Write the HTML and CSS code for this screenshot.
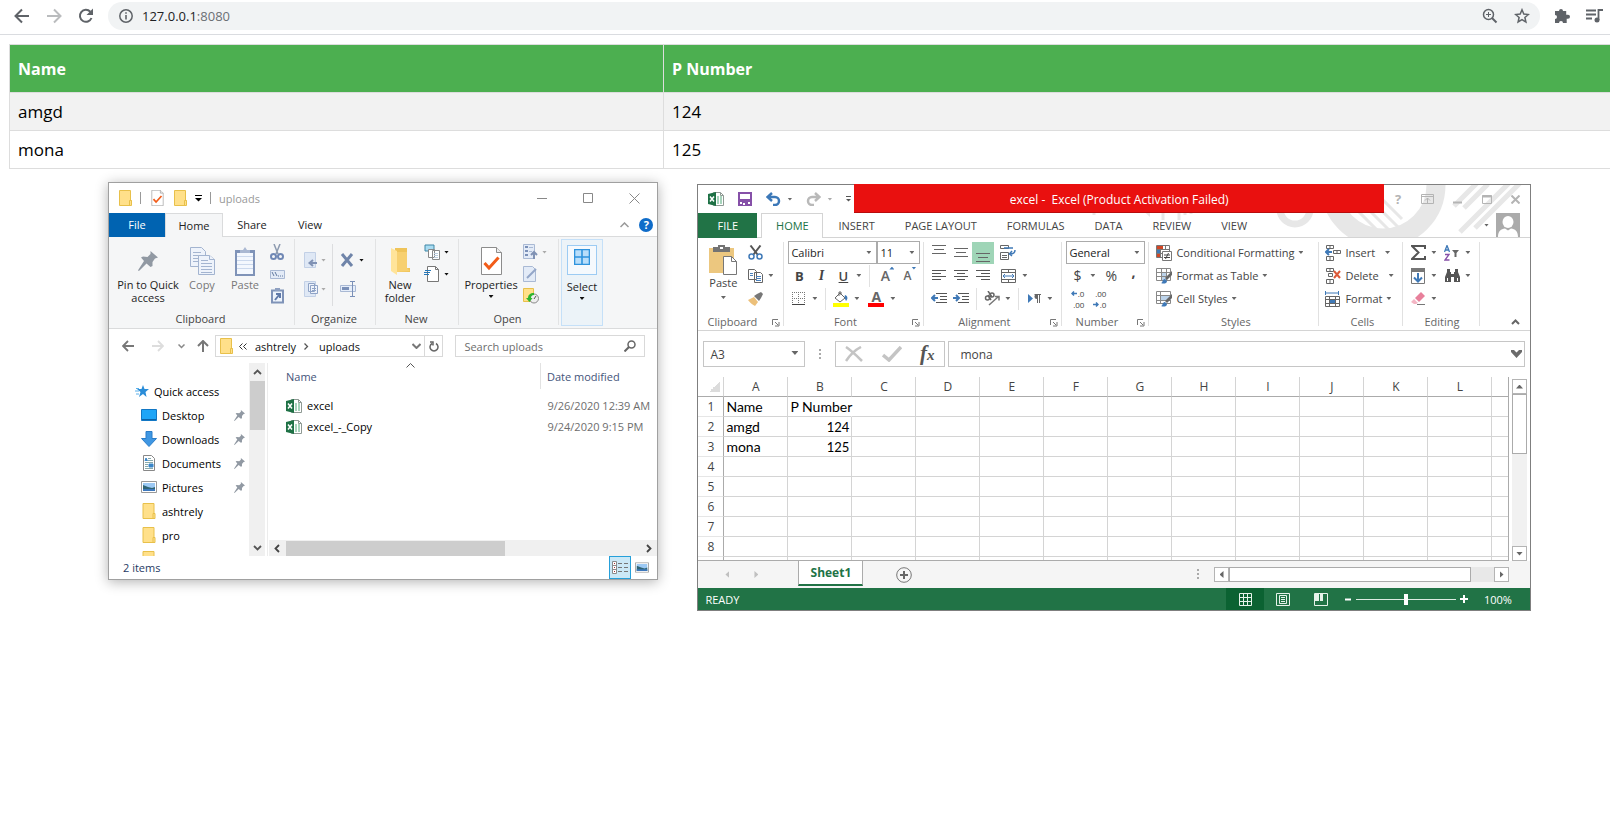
FILE: index.html
```html
<!DOCTYPE html>
<html lang="en">
<head>
<meta charset="utf-8">
<title>127.0.0.1:8080</title>
<link rel="stylesheet" href="styles.css">
</head>
<body>
<svg class="defs" aria-hidden="true">
  <symbol id="folder" viewBox="0 0 13 16"><path d="M.5.5h11v10h1v5H.5z" fill="#ffe08a" stroke="#e8c04a"/><path d="M10.500 15V10.500h2" fill="none" stroke="#e8c04a"/></symbol>
  <symbol id="pin" viewBox="0 0 20 20"><path d="M12.500 0 20 6.500 17 7.500 14.500 11v4l-2 1-4-3.500L1.500 19.500 0 20l.5-1.500L6 10 3 6.500 5 5.500 9.500 6 12.500 3z" fill="#9199a3"/></symbol>
  <symbol id="xls" viewBox="0 0 16 16"><path d="M5.500 1.500h7l3 3v10h-10z" fill="#fff" stroke="#8f9a94"/><path d="M12.500 1.500v3h3" fill="none" stroke="#8f9a94"/><path d="M9 6h2m1 0h2M9 8h2m1 0h2M9 10h2m1 0h2M9 12h2m1 0h2" stroke="#4fa878"/><path d="M0 3l8-2v14l-8-2z" fill="#1e7145"/><path d="M2 5.500l4 5M6 5.500l-4 5" stroke="#fff" stroke-width="1.500"/></symbol>
  <symbol id="check-doc" viewBox="0 0 21 28"><path d="M.5.5h15l5 5v22H.5z" fill="#fff" stroke="#8c8c8c"/><path d="M15.500.5v5h5" fill="#eee" stroke="#8c8c8c"/><path d="M3.500 16l4.500 5L17.500 10.500" fill="none" stroke="#f25c19" stroke-width="3"/></symbol>
  <symbol id="launcher" viewBox="0 0 8 8"><path d="M.5 6V.5H6M3 3l3 3M7 3v4H3" fill="none" stroke="#777"/></symbol>
  <symbol id="picture" viewBox="0 0 16 12"><path d="M.5.5h15v11H.5z" fill="#fff" stroke="#999"/><path d="M2 2h12v8H2z" fill="#9cc9f4"/><path d="M2 4l5 2 4 1 3-1v4H2z" fill="#2f6473"/><path d="M2 8h12v2H2z" fill="#3d78bd"/></symbol>
  <symbol id="hlines" viewBox="0 0 14 12"><path d="M0 1.500h14M2 5.500h10M0 9.500h14" stroke="#666"/></symbol>
</svg>

<header class="toolbar">
  <button class="nav-btn" aria-label="Back"><svg width="16" height="16" viewBox="0 0 16 16"><path d="M15 8H2M8 1.500 1.500 8 8 14.500" fill="none" stroke="#5f6368" stroke-width="2"/></svg></button>
  <button class="nav-btn" aria-label="Forward"><svg width="16" height="16" viewBox="0 0 16 16"><path d="M1 8h13M8 1.500 14.500 8 8 14.500" fill="none" stroke="#babcbe" stroke-width="2"/></svg></button>
  <button class="nav-btn" aria-label="Reload"><svg width="16" height="16" viewBox="0 0 16 16"><path d="M13.500 10A6 6 0 1 1 12.300 3.700" fill="none" stroke="#5f6368" stroke-width="2"/><path d="M15 .5V7H8.500z" fill="#5f6368"/></svg></button>
  <div class="omnibox">
    <svg width="14" height="14" viewBox="0 0 14 14"><circle cx="7" cy="7" r="6.200" fill="none" stroke="#5f6368" stroke-width="1.500"/><path d="M7 6v4.500M7 3.300v1.500" stroke="#5f6368" stroke-width="1.600"/></svg>
    <a class="url" href="#">127.0.0.1<span>:8080</span></a>
    <svg width="16" height="16" viewBox="0 0 16 16"><circle cx="6.500" cy="6.500" r="5" fill="none" stroke="#5f6368" stroke-width="1.500"/><path d="M10 10l4.500 4.500" stroke="#5f6368" stroke-width="2"/><path d="M4 6.500h5M6.500 4v5" stroke="#5f6368"/></svg>
    <svg class="star" width="16" height="16" viewBox="0 0 16 16"><path d="M8 1.800l1.800 4.300 4.600.4-3.500 3 1 4.500L8 11.700 4.100 14l1-4.500-3.500-3 4.600-.4z" fill="none" stroke="#5f6368" stroke-width="1.500"/></svg>
  </div>
  <svg class="puzzle" width="16" height="16" viewBox="0 0 16 16"><path d="M5 3a2 2 0 0 1 4 0h3.200v3.700H14a2 2 0 0 1 0 4h-1.300V15H9a2 2 0 0 0-4 0H1v-4a2 2 0 0 0 0-4V3z" fill="#5f6368"/></svg>
  <svg width="17" height="14" viewBox="0 0 17 14"><path d="M0 1.500h10M0 5.500h10M0 9.500h6" stroke="#5f6368" stroke-width="1.800"/><path d="M12.500 11V1H17" fill="none" stroke="#5f6368" stroke-width="1.800"/><circle cx="11" cy="11" r="2.500" fill="#5f6368"/></svg>
</header>

<main>
<table class="people">
  <colgroup><col class="col-name"><col></colgroup>
  <thead><tr><th>Name</th><th>P Number</th></tr></thead>
  <tbody><tr><td>amgd</td><td>124</td></tr><tr><td>mona</td><td>125</td></tr></tbody>
</table>

<div class="desktop">
<section class="explorer" aria-label="File Explorer">
  <div class="ex-title">
    <svg width="13" height="16"><use href="#folder"/></svg><i class="bar"></i>
    <svg width="13" height="16"><use href="#check-doc"/></svg>
    <svg width="13" height="16"><use href="#folder"/></svg>
    <svg width="7" height="7" viewBox="0 0 7 7"><path d="M0 .5h7" stroke="#000"/><path d="M0 3h7L3.500 6.500z"/></svg>
    <i class="bar"></i><span class="ex-name">uploads</span>
    <button class="win-btn" aria-label="Minimize"><svg width="11" height="11" viewBox="0 0 11 11"><path d="M0 5.500h10" stroke="#888"/></svg></button>
    <button class="win-btn" aria-label="Maximize"><svg width="11" height="11" viewBox="0 0 11 11"><path d="M.5.5h9v9h-9z" fill="none" stroke="#888"/></svg></button>
    <button class="win-btn" aria-label="Close"><svg width="11" height="11" viewBox="0 0 11 11"><path d="M.5.5l10 10M10.500.5l-10 10" stroke="#888"/></svg></button>
  </div>
  <nav class="ex-tabs">
    <button class="file">File</button><button class="active">Home</button><button>Share</button><button>View</button>
    <svg class="push" width="9" height="6" viewBox="0 0 9 6"><path d="M.5 5l4-4 4 4" fill="none" stroke="#999" stroke-width="1.500"/></svg>
    <button class="help" aria-label="Help">?</button>
  </nav>
  <div class="ex-ribbon">
    <div class="group g-clip">
      <div class="body">
        <button class="big w66"><svg width="20" height="20"><use href="#pin"/></svg><span>Pin to Quick access</span></button>
        <button class="big dim w42"><svg width="25" height="28" viewBox="0 0 25 28"><g fill="#eef3fb" stroke="#a3b4d0"><path d="M.5.5h11l4 4v15H.5z"/><path d="M3 5.500h8M3 8.500h10M3 11.500h10M3 14.500h6"/><path d="M8.500 8.500h11l5 4v15h-16z"/><path d="M11 13.500h7M11 16.500h11M11 19.500h11M11 22.500h11M11 25.500h11M19.500 8.500v4h5"/></g></svg><span>Copy</span></button>
        <button class="big dim w44"><svg width="20" height="29" viewBox="0 0 20 29"><path d="M0 3h20v26H0z" fill="#7f93b8"/><path d="M2 6h16v21H2z" fill="#f4f8fe"/><path d="M2 9.500h16M2 13.500h16M2 17.500h16M2 21.500h16" stroke="#ccd9ed"/><path d="M5 6V3h3l2-3 2 3h3v3z" fill="#aab8d2"/></svg><span>Paste</span></button>
        <div class="stack">
          <svg width="14" height="16" viewBox="0 0 14 16"><path d="M4 0l4 10M10 0L6 10" stroke="#8d9bb0" stroke-width="1.500"/><g fill="none" stroke="#7088b5" stroke-width="2"><circle cx="3.500" cy="12.500" r="2.500"/><circle cx="10.500" cy="12.500" r="2.500"/></g></svg>
          <svg width="15" height="9" viewBox="0 0 15 9"><path d="M.5.5h14v8H.5z" fill="#e3ebf7" stroke="#a9b9d4"/><path d="M2 2l2 4M5 2l2 4M8 6h1m1 0h1m1 0h1" stroke="#61799f"/></svg>
          <svg width="13" height="16" viewBox="0 0 13 16"><path d="M1 2.500h11v12H1z" fill="#eef4fc" stroke="#7f93b8" stroke-width="2"/><path d="M4 0h5v3H4z" fill="#8ea0c1"/><path d="M4 12l4-5M5 6h4v4" fill="none" stroke="#607aa9" stroke-width="2"/></svg>
        </div>
      </div>
      <div class="label">Clipboard</div>
    </div>
    <div class="group g-org">
      <div class="body">
        <div class="pair">
          <span><svg width="14" height="16" viewBox="0 0 14 16"><path d="M.5.5h11v15H.5z" fill="#dfe8f5" stroke="#c2d0e6"/><path d="M5 11h8M9 8l-3.500 3L9 14" fill="none" stroke="#8092b4" stroke-width="2"/></svg><i class="caret faint"></i></span>
          <span><svg width="14" height="16" viewBox="0 0 14 16"><path d="M.5.5h11v15H.5z" fill="#dfe8f5" stroke="#c2d0e6"/><path d="M4.500 2.500h6v8h-6zM6.500 4.500h7v8h-7zM8 7.500h4M8 9.500h4" fill="#eef3fb" stroke="#8fa3c6"/></svg><i class="caret faint"></i></span>
        </div>
        <div class="pair line">
          <span><svg width="16" height="14" viewBox="0 0 16 14"><path d="M2 1l10 12M12 1L2 13" stroke="#6f84a9" stroke-width="3"/></svg><i class="caret"></i></span>
          <span><svg width="17" height="16" viewBox="0 0 17 16"><path d="M.5 4.500h15v6H.5z" fill="#e6eefa" stroke="#a9b9d4"/><path d="M2 7.500h7" stroke="#7a90b8" stroke-width="3"/><path d="M10 .5h5M10 15.500h5M12.500 1v14" stroke="#7a90b8"/></svg></span>
        </div>
      </div>
      <div class="label">Organize</div>
    </div>
    <div class="group g-new">
      <div class="body">
        <button class="big w48"><svg width="19" height="28" viewBox="0 0 19 28"><path d="M4 1h12v20h3v4H4z" fill="#efc45a"/><path d="M0 1l6 3v24l-6-4z" fill="#ffe49a"/><path d="M6 5h10v16l3 3-13 1z" fill="#f7d070"/></svg><span>New folder</span></button>
        <div class="pair tight">
          <span><svg width="17" height="16" viewBox="0 0 17 16"><path d="M1 1h9v6H1z" fill="#a9dcf2" stroke="#3f87a6"/><path d="M4.500 5.500h6v8h-6zM8.500 6.500h7v9h-7z" fill="#fff" stroke="#888"/><path d="M10 9.500h4M10 11.500h4M10 13.500h4" stroke="#bcd"/></svg><i class="caret"></i></span>
          <span><svg width="17" height="16" viewBox="0 0 17 16"><path d="M3.500.5h8l3 3v12h-11z" fill="#fff" stroke="#777"/><path d="M11.500.5v3h3" fill="none" stroke="#777"/><path d="M1 4.500h6M0 6.500h6M0 8.500h5" stroke="#2577b8"/></svg><i class="caret"></i></span>
        </div>
      </div>
      <div class="label">New</div>
    </div>
    <div class="group g-open">
      <div class="body">
        <button class="big w64"><svg width="21" height="28"><use href="#check-doc"/></svg><span>Properties<i class="caret"></i></span></button>
        <div class="stack left">
          <span><svg width="15" height="16" viewBox="0 0 15 16"><path d="M.5.5h11v14H.5z" fill="#e3ebf7" stroke="#a9b9d4"/><path d="M2 3h3M2 7h3M2 11h3" stroke="#7a90b8" stroke-width="2"/><path d="M6 3.500h4M6 7.500h3" stroke="#a9b9d4"/><path d="M11 15V8M8 11l3-3 3 3" fill="none" stroke="#8092b4" stroke-width="2"/></svg><i class="caret faint"></i></span>
          <svg width="14" height="16" viewBox="0 0 14 16"><path d="M.5.5h9l3 3v12H.5z" fill="#e3ebf7" stroke="#a9b9d4"/><path d="M4 12l9-9" stroke="#93a6c8" stroke-width="2"/></svg>
          <svg width="16" height="16" viewBox="0 0 16 16"><path d="M.5.5h10v13H.5z" fill="#ffe08a" stroke="#e8c04a"/><circle cx="11" cy="10.500" r="4.500" fill="#eee" stroke="#888"/><path d="M11 11l2-3" stroke="#555"/><path d="M11 5c-4 0-6 2-6 5H3l3.500 4 3-4H8c0-2 1-3 3-3z" fill="#2db52d"/></svg>
        </div>
      </div>
      <div class="label">Open</div>
    </div>
    <button class="select-btn"><span class="sel-box"><svg width="16" height="16" viewBox="0 0 16 16"><path d="M.5.5h15v15H.5zM8 .5v15M.5 8h15" fill="#b9defa" stroke="#2f93dd" stroke-width="1.600"/></svg></span><span>Select</span><i class="caret"></i></button>
  </div>
  <div class="ex-address">
    <svg width="12" height="12" viewBox="0 0 12 12"><path d="M12 6H1M6 1L1 6l5 5" fill="none" stroke="#777" stroke-width="1.800"/></svg>
    <svg class="m18" width="12" height="12" viewBox="0 0 12 12"><path d="M0 6h11M6 1l5 5-5 5" fill="none" stroke="#ddd" stroke-width="1.800"/></svg>
    <svg class="m14" width="7" height="5" viewBox="0 0 7 5"><path d="M.5.5l3 3 3-3" fill="none" stroke="#888" stroke-width="1.500"/></svg>
    <svg class="m12" width="12" height="12" viewBox="0 0 12 12"><path d="M6 12V1M1 6l5-5 5 5" fill="none" stroke="#777" stroke-width="2"/></svg>
    <div class="crumbs">
      <svg width="13" height="16"><use href="#folder"/></svg>
      <svg class="m6" width="8" height="7" viewBox="0 0 8 7"><path d="M3.500.5l-3 3 3 3M7.500.5l-3 3 3 3" fill="none" stroke="#333"/></svg>
      <a class="m8" href="#">ashtrely</a>
      <svg class="m8" width="5" height="7" viewBox="0 0 5 7"><path d="M.5.5l3 3-3 3" fill="none" stroke="#555" stroke-width="1.300"/></svg>
      <a class="m10" href="#">uploads</a>
      <svg class="push" width="9" height="6" viewBox="0 0 9 6"><path d="M.5 1l4 4 4-4" fill="none" stroke="#777" stroke-width="2"/></svg>
      <button class="refresh" aria-label="Refresh"><svg width="10" height="11" viewBox="0 0 10 11"><path d="M7 2.500a4 4 0 1 1-4 0M1 1h3v3.500" fill="none" stroke="#666" stroke-width="1.500"/></svg></button>
    </div>
    <label class="search"><input type="text" placeholder="Search uploads" aria-label="Search uploads"><svg width="12" height="12" viewBox="0 0 12 12"><circle cx="7.500" cy="4.500" r="3.500" fill="none" stroke="#666" stroke-width="1.500"/><path d="M5 7L.5 11.500" stroke="#666" stroke-width="2"/></svg></label>
  </div>
  <div class="ex-main">
    <nav class="side">
      <a class="top" href="#"><svg width="14" height="12" viewBox="0 0 14 12"><path d="M8 0l1.500 4H14l-3.500 3 1 5L8 9l-4 3 1.500-5L2 4h4.500z" fill="#2a8dd8"/><path d="M1 3.500h3M0 6h4M1 9h3" stroke="#5bb0ea"/></svg>Quick access</a>
      <a href="#"><svg width="16" height="12" viewBox="0 0 16 12"><path d="M.5.5h15v11H.5z" fill="#1ea5f7" stroke="#1277c4"/><path d="M1 10.500h14" stroke="#0a62a8"/></svg>Desktop<svg class="pin" width="11" height="11"><use href="#pin"/></svg></a>
      <a href="#"><svg width="16" height="16" viewBox="0 0 16 16"><path d="M5 .5h6v7h4.500L8 15.500.5 7.500H5z" fill="#3f97e3" stroke="#2a7cc8"/></svg>Downloads<svg class="pin" width="11" height="11"><use href="#pin"/></svg></a>
      <a href="#"><svg width="16" height="16" viewBox="0 0 16 16"><path d="M2.500.5h8l3 3v12h-11z" fill="#fff" stroke="#888"/><path d="M7 3.500h3M7 5.500h5M4 7.500h8M4 9.500h3M4 11.500h3M4 13.500h8" stroke="#8aa"/><path d="M4 6l1-3 1.500 3M8 9h4v3H8z" fill="#3a86c8" stroke="#3a86c8"/></svg>Documents<svg class="pin" width="11" height="11"><use href="#pin"/></svg></a>
      <a href="#"><svg width="16" height="12"><use href="#picture"/></svg>Pictures<svg class="pin" width="11" height="11"><use href="#pin"/></svg></a>
      <a href="#"><svg width="16" height="16"><use href="#folder"/></svg>ashtrely</a>
      <a href="#"><svg width="16" height="16"><use href="#folder"/></svg>pro</a>
      <a href="#"><svg width="16" height="16"><use href="#folder"/></svg></a>
    </nav>
    <div class="vscroll">
      <svg width="9" height="6" viewBox="0 0 9 6"><path d="M1 5l3.500-3.500L8 5" fill="none" stroke="#555" stroke-width="1.800"/></svg>
      <i></i>
      <svg width="9" height="6" viewBox="0 0 9 6"><path d="M1 1l3.500 3.500L8 1" fill="none" stroke="#555" stroke-width="1.800"/></svg>
    </div>
    <div class="files">
      <svg class="sort" width="9" height="5" viewBox="0 0 9 5"><path d="M.5 4.500l4-4 4 4" fill="none" stroke="#555"/></svg>
      <table>
        <colgroup><col><col class="col-date"></colgroup>
        <thead><tr><th>Name</th><th>Date modified</th></tr></thead>
        <tbody>
          <tr><td><span><svg width="16" height="16"><use href="#xls"/></svg>excel</span></td><td>9/26/2020 12:39 AM</td></tr>
          <tr><td><span><svg width="16" height="16"><use href="#xls"/></svg>excel_-_Copy</span></td><td>9/24/2020 9:15 PM</td></tr>
        </tbody>
      </table>
      <div class="hscroll">
        <svg width="6" height="9" viewBox="0 0 6 9"><path d="M5 1L1.500 4.500 5 8" fill="none" stroke="#444" stroke-width="1.800"/></svg>
        <i></i>
        <svg width="6" height="9" viewBox="0 0 6 9"><path d="M1 1l3.500 3.500L1 8" fill="none" stroke="#444" stroke-width="1.800"/></svg>
      </div>
    </div>
  </div>
  <div class="ex-status">
    <span>2 items</span>
    <button class="view on" aria-label="Details"><svg width="16" height="13" viewBox="0 0 16 13"><path d="M.5.500h4v12h-4zM.5 4.500h4M.5 8.500h4" fill="#fff" stroke="#8a8a8a"/><path d="M6 2.500h4m2 0h4M6 6.500h4m2 0h4M6 10.500h4m2 0h4" stroke="#777"/><path d="M2 2.500h1M2 6.500h1M2 10.500h1" stroke="#a33"/></svg></button>
    <button class="view" aria-label="Large icons"><svg width="14" height="11" viewBox="0 0 16 12"><use href="#picture"/></svg></button>
  </div>
</section>

<section class="excel" aria-label="Excel">
  <svg class="art" width="460" height="52" viewBox="0 0 460 52" aria-hidden="true">
    <g fill="none" stroke="#e7e7e7">
      <circle cx="313" cy="0" r="53" stroke-width="19"/>
      <circle cx="225" cy="24" r="15" stroke-width="7"/>
      <path d="M262 0l52 52M276 2l48 48M290 4l40 40M304 6l28 28" stroke-width="3"/>
      <path d="M390 47l50-50M405 43l46-46M384 21l24-24M394 23l24-24" stroke-width="5"/>
      <path d="M24 23v7M93 23v12M109 23v12M115 23v7M121 23v6M127 23v5" stroke-width="3"/>
    </g>
    <path d="M70 23h10v9z" fill="#e7e7e7"/>
  </svg>
  <div class="xl-title">
    <div class="quick">
      <svg width="16" height="16"><use href="#xls"/></svg>
      <svg class="m14" width="14" height="14" viewBox="0 0 14 14"><path d="M1 1h12v12H1z" fill="#fff" stroke="#8650a8" stroke-width="2"/><path d="M0 7h14v3H0zM4 10h6v4H4z" fill="#8650a8"/><path d="M5 11h2v2H5z" fill="#fff"/></svg>
      <svg class="m14" width="15" height="14" viewBox="0 0 15 14"><path d="M1 5h8a4 4 0 0 1 0 8H7M6 1L1.500 5 6 9" fill="none" stroke="#3c78b8" stroke-width="2.500"/></svg>
      <i class="caret grey m6"></i>
      <svg class="m14" width="15" height="14" viewBox="0 0 15 14"><path d="M14 5H6a4 4 0 0 0 0 8h2M9 1l4.500 4L9 9" fill="none" stroke="#b9b9b9" stroke-width="2.500"/></svg>
      <i class="caret faint m6"></i>
      <svg class="m14" width="5" height="6" viewBox="0 0 5 6"><path d="M0 .5h5" stroke="#555"/><path d="M0 3h5L2.500 5.500z" fill="#555"/></svg>
    </div>
    <div class="red">excel -  Excel (Product Activation Failed)</div>
    <div class="controls">
      <b>?</b>
      <svg width="13" height="10" viewBox="0 0 13 10"><path d="M.5.5h12v9H.5zM.5 2.500h12M6.500 9V4M4 6.500L6.500 4 9 6.500" fill="none" stroke="#b4b4b4"/></svg>
      <svg width="9" height="9" viewBox="0 0 9 9"><path d="M0 7.500h9" stroke="#b4b4b4" stroke-width="2"/></svg>
      <svg width="10" height="9" viewBox="0 0 10 9"><path d="M.5.5h9v8h-9z" fill="none" stroke="#b4b4b4"/><path d="M0 1.500h10" stroke="#b4b4b4" stroke-width="2"/></svg>
      <svg width="9" height="9" viewBox="0 0 9 9"><path d="M.5.5l8 8M8.500.5l-8 8" stroke="#b4b4b4" stroke-width="2"/></svg>
    </div>
  </div>
  <nav class="xl-tabs">
    <button class="file">FILE</button><button class="active">HOME</button><button>INSERT</button><button>PAGE LAYOUT</button><button>FORMULAS</button><button>DATA</button><button>REVIEW</button><button>VIEW</button>
    <i class="caret grey push"></i>
    <svg class="avatar" width="24" height="24" viewBox="0 0 24 24"><path d="M0 0h24v24H0z" fill="#ababab"/><ellipse cx="12" cy="9" rx="5.500" ry="6" fill="#fff"/><path d="M2 24c0-6 3-8 7-8.500l3 2 3-2c4 .5 7 2.500 7 8.500z" fill="#fff"/></svg>
  </nav>
  <div class="xl-ribbon">
    <div class="xg x-clip">
      <div class="xbody">
        <button class="paste"><svg width="29" height="31" viewBox="0 0 29 31"><path d="M0 4h25v25H0z" fill="#ecc77f"/><path d="M4 3h5V1h7v2h5v5H4z" fill="#737373"/><path d="M11 3h3v2h-3z" fill="#fff"/><path d="M14.500 12.500h8l5 5v13h-13z" fill="#fff" stroke="#777"/><path d="M22.500 12.500v5h5" fill="none" stroke="#777"/></svg><span>Paste</span><i class="caret grey"></i></button>
        <div class="xcol">
          <div class="xr"><button class="b" aria-label="Cut"><svg width="15" height="15" viewBox="0 0 15 15"><path d="M2.500.5l7 9M12.500.5l-7 9" stroke="#555" stroke-width="2"/><g fill="none" stroke="#3f79b7" stroke-width="1.500"><circle cx="3.500" cy="11.500" r="2.500"/><circle cx="11.500" cy="11.500" r="2.500"/></g></svg></button></div>
          <div class="xr"><button class="b" aria-label="Copy"><svg width="15" height="14" viewBox="0 0 15 14"><path d="M.5.5h6l2 2v8h-8zM6.500 3.500h6l2 2v8h-8z" fill="#fff" stroke="#666"/><path d="M2 4.500h3M2 6.500h3M8 7.500h5M8 9.500h5M8 11.500h5" stroke="#4a80bd"/></svg></button><i class="caret grey"></i></div>
          <div class="xr"><button class="b" aria-label="Format painter"><svg width="15" height="14" viewBox="0 0 15 14"><path d="M0 8l6-3 4 5-3 4c-2-1-5-3-7-6z" fill="#ecc07a"/><path d="M6 4l3-2 4-2 2 2-2 4-2 3z" fill="#777"/></svg></button></div>
        </div>
      </div>
      <div class="xlabel launch">Clipboard<svg width="8" height="8"><use href="#launcher"/></svg></div>
    </div>
    <div class="xg x-font">
      <div class="xcol">
        <div class="xr"><span class="combo grow"><select aria-label="Font"><option>Calibri</option></select></span><span class="combo size"><select aria-label="Font size"><option>11</option></select></span></div>
        <div class="xr"><button class="b"><b>B</b></button><button class="b"><em>I</em></button><button class="b"><u>U</u></button><i class="caret grey"></i><i class="vr"></i><button class="b font-a">A<i class="up"></i></button><button class="b font-a small">A<i class="down"></i></button></div>
        <div class="xr"><button class="b" aria-label="Borders"><svg width="14" height="14" viewBox="0 0 14 14"><path d="M.5 0v13M6.500 0v13M12.500 0v13M0 .5h13M0 6.500h13" stroke="#777" stroke-dasharray="1 1"/><path d="M0 12.500h13" stroke="#444"/></svg></button><i class="caret grey"></i><i class="vr"></i><button class="b" aria-label="Fill colour"><svg width="16" height="16" viewBox="0 0 16 16"><path d="M2 7l5-5 5 5-5 4zM6 5V1h2v3" fill="#fff" stroke="#666"/><path d="M12 4c3 1 3 4 1 6-1-2-2-4-1-6z" fill="#3f79b7"/><path d="M0 12h16v4H0z" fill="#ff0"/></svg></button><i class="caret grey"></i><button class="b fc">A</button><i class="caret grey"></i></div>
      </div>
      <div class="xlabel launch">Font<svg width="8" height="8"><use href="#launcher"/></svg></div>
    </div>
    <div class="xg x-align">
      <div class="xcol">
        <div class="xr"><button class="b al-top" aria-label="Top"><svg width="14" height="12"><use href="#hlines"/></svg></button><button class="b" aria-label="Middle"><svg width="14" height="12"><use href="#hlines"/></svg></button><button class="b al-bot" aria-label="Bottom"><svg width="14" height="12"><use href="#hlines"/></svg></button><button class="b w28" aria-label="Wrap text"><svg width="16" height="15" viewBox="0 0 16 15"><path d="M.5.5h8v3h-8zM.5 7.500h8v7h-8zM2 10.500h5M2 12.500h5" fill="none" stroke="#666"/><path d="M4 3h9M15 5c0 3-2 4-5 4m2-3L9.500 9 12 11" fill="none" stroke="#3f79b7" stroke-width="1.500"/></svg></button></div>
        <div class="xr"><button class="b" aria-label="Left"><svg width="14" height="11" viewBox="0 0 14 11"><path d="M0 .5h14M0 3.500h9M0 6.500h14M0 9.500h9" stroke="#555"/></svg></button><button class="b" aria-label="Centre"><svg width="14" height="11" viewBox="0 0 14 11"><path d="M0 .5h14M3 3.500h8M0 6.500h14M3 9.500h8" stroke="#555"/></svg></button><button class="b" aria-label="Right"><svg width="14" height="11" viewBox="0 0 14 11"><path d="M0 .5h14M5 3.500h9M0 6.500h14M5 9.500h9" stroke="#555"/></svg></button><button class="b w28" aria-label="Merge"><svg width="15" height="14" viewBox="0 0 15 14"><path d="M.5.5h14v13H.5zM.5 3.500h14M.5 10.500h14M7.500.5v3M7.500 10.500v3" fill="none" stroke="#666"/><path d="M2 7h11M4 5L2 7l2 2M11 5l2 2-2 2" fill="none" stroke="#3f79b7"/></svg></button><i class="caret grey"></i></div>
        <div class="xr"><button class="b" aria-label="Decrease indent"><svg width="16" height="11" viewBox="0 0 16 11"><path d="M5 .5h11M9 3.500h7M9 6.500h7M5 9.500h11" stroke="#555"/><path d="M7 5H1M4 2L1 5l3 3" fill="none" stroke="#3f79b7" stroke-width="2"/></svg></button><button class="b" aria-label="Increase indent"><svg width="16" height="11" viewBox="0 0 16 11"><path d="M5 .5h11M9 3.500h7M9 6.500h7M5 9.500h11" stroke="#555"/><path d="M0 5h6M3 2l3 3-3 3" fill="none" stroke="#3f79b7" stroke-width="2"/></svg></button><i class="vr"></i><button class="b" aria-label="Orientation"><svg width="16" height="15" viewBox="0 0 16 15"><g fill="none" stroke="#666" stroke-width="1.500"><circle cx="3.500" cy="7" r="2"/><path d="M4 4l3 5"/><circle cx="8" cy="4" r="2"/><path d="M4 0l4 6"/></g><path d="M5 14L14 6M11 5.500h4v4" fill="none" stroke="#777" stroke-width="1.500"/></svg></button><i class="caret grey"></i><i class="vr"></i><button class="b" aria-label="Text direction"><svg width="13" height="9" viewBox="0 0 13 9"><path d="M0 0l5 4.500L0 9z" fill="#3f79b7"/><path d="M9.500 0v9M11.500 0v9M6.500.5H13" stroke="#666"/><path d="M9 0v5a2.500 2.500 0 0 1 0-5z" fill="#666"/></svg></button><i class="caret grey"></i></div>
      </div>
      <div class="xlabel launch">Alignment<svg width="8" height="8"><use href="#launcher"/></svg></div>
    </div>
    <div class="xg x-num">
      <div class="xcol">
        <div class="xr"><span class="combo grow"><select aria-label="Number format"><option>General</option></select></span></div>
        <div class="xr sym"><button class="b">$</button><i class="caret grey"></i><button class="b">%</button><button class="b comma"><b>,</b></button></div>
        <div class="xr"><button class="b dec" aria-label="Increase decimal"><span><svg width="6" height="5" viewBox="0 0 6 5"><path d="M6 2.500H1M3 .5l-2 2 2 2" fill="none" stroke="#3f79b7" stroke-width="1.500"/></svg>.0</span><span>.00</span></button><button class="b dec" aria-label="Decrease decimal"><span>.00</span><span><svg width="6" height="5" viewBox="0 0 6 5"><path d="M0 2.500h5M3 .5l2 2-2 2" fill="none" stroke="#3f79b7" stroke-width="1.500"/></svg>.0</span></button></div>
      </div>
      <div class="xlabel launch">Number<svg width="8" height="8"><use href="#launcher"/></svg></div>
    </div>
    <div class="xg x-styles">
      <div class="xcol">
        <div class="xr"><button class="txt"><svg width="16" height="16" viewBox="0 0 16 16"><path d="M.5.5h13v12H.5zM.5 4.500h13M.5 8.500h6M4.500.5v12M9.500.5v4" fill="none" stroke="#777"/><path d="M1 1h6v3H1z" fill="#d24726"/><path d="M1 5h3v3H1z" fill="#3f79b7"/><path d="M1 9h3v3H1z" fill="#d24726"/><path d="M6.500 6.500h9v9h-9z" fill="#fff" stroke="#777"/><path d="M8 10h6M8 12.500h6M12.500 8l-3 6" stroke="#444"/></svg>Conditional Formatting<i class="caret grey"></i></button></div>
        <div class="xr"><button class="txt"><svg width="16" height="16" viewBox="0 0 16 16"><path d="M.5.5h14v12H.5zM.5 4.500h14M.5 8.500h14M5.500.5v12M10.500.5v12" fill="#fff" stroke="#888"/><path d="M6 5h4v3H6zM6 9h4v3H6z" fill="#bcd3ea"/><path d="M16 3v4l-5 5-2-2z" fill="#666"/><path d="M5 15c2 0 1-4 4-4l2 2c0 3-4 3-6 2z" fill="#3f79b7"/></svg>Format as Table<i class="caret grey"></i></button></div>
        <div class="xr"><button class="txt"><svg width="16" height="16" viewBox="0 0 16 16"><path d="M.5.5h14v12H.5zM.5 4.500h14M.5 9.500h14M4.500.5v12" fill="#fff" stroke="#888"/><path d="M5 5h10v4H5z" fill="#bcd3ea"/><path d="M16 3v4l-5 5-2-2z" fill="#666"/><path d="M5 15c2 0 1-4 4-4l2 2c0 3-4 3-6 2z" fill="#3f79b7"/></svg>Cell Styles<i class="caret grey"></i></button></div>
      </div>
      <div class="xlabel">Styles</div>
    </div>
    <div class="xg x-cells">
      <div class="xcol">
        <div class="xr"><button class="txt"><svg width="16" height="16" viewBox="0 0 16 16"><path d="M1.500.5h7v3h-7zM5 .5v3M1.500 11.500h7v4h-7zM5 11.500v4M8.500 5.500h7v3h-7zM12 5.500v3" fill="#fff" stroke="#666"/><path d="M7 7H1M4 4L1 7l3 3" fill="none" stroke="#3f79b7" stroke-width="2"/></svg>Insert<i class="caret grey m6"></i></button></div>
        <div class="xr"><button class="txt"><svg width="16" height="16" viewBox="0 0 16 16"><path d="M1.500.5h7v3h-7zM5 .5v3M1.500 11.500h7v4h-7zM5 11.500v4M3.500 5.500h4v3h-4z" fill="#fff" stroke="#666"/><path d="M9 3l6 7M15 3L9 10" stroke="#dd5a3a" stroke-width="2"/></svg>Delete<i class="caret grey m6"></i></button></div>
        <div class="xr"><button class="txt"><svg width="16" height="16" viewBox="0 0 16 16"><path d="M.5 5.500h14v10H.5zM.5 8.500h14M.5 12.500h14M4.500 5.500v10M10.500 5.500v10" fill="#fff" stroke="#666"/><path d="M5 9h5v3H5z" fill="#3f79b7"/><path d="M.5 0v4M13.500 0v4M1 2h12" stroke="#3f79b7"/></svg>Format<i class="caret grey"></i></button></div>
      </div>
      <div class="xlabel">Cells</div>
    </div>
    <div class="xg x-edit">
      <div class="xcol">
        <div class="xr"><button class="b" aria-label="Sum"><svg width="15" height="15" viewBox="0 0 15 15"><path d="M14 4V1H1l6.500 6.500L1 14h13v-3" fill="none" stroke="#555" stroke-width="2"/></svg></button><i class="caret grey"></i><button class="b" aria-label="Sort and filter"><svg width="16" height="16" viewBox="0 0 16 16"><path d="M.5 7L3 .5 5.500 7M1.500 5h3" fill="none" stroke="#3f79b7" stroke-width="1.300"/><path d="M1 9.500h4L1 15h4.500" fill="none" stroke="#8650a8" stroke-width="1.300"/><path d="M8 5h7l-2.500 3v4h-2V8z" fill="#666"/></svg></button><i class="caret grey"></i></div>
        <div class="xr"><button class="b" aria-label="Fill"><svg width="14" height="16" viewBox="0 0 14 16"><path d="M.5.5h13v15H.5z" fill="#fff" stroke="#777"/><path d="M0 0h14v4H0z" fill="#777"/><path d="M7 5v8M3 9.500l4 4 4-4" fill="none" stroke="#3f79b7" stroke-width="2"/></svg></button><i class="caret grey"></i><button class="b" aria-label="Find"><svg width="15" height="13" viewBox="0 0 15 13"><path d="M2 3V0h3v3h1v2h3V3h1V0h3v3l2 5v5H9V8H6v5H0V8z" fill="#555"/><path d="M2.500 9v3M12.500 9v3" stroke="#fff"/></svg></button><i class="caret grey"></i></div>
        <div class="xr"><button class="b" aria-label="Clear"><svg width="14" height="13" viewBox="0 0 14 13"><path d="M4 6l6-6 4 4-6 6z" fill="#e8809b"/><path d="M3 7l4 4-2 1H3L0 10z" fill="#f4b5c4"/><path d="M6 12.500h8" stroke="#777"/></svg></button><i class="caret grey"></i></div>
      </div>
      <div class="xlabel">Editing</div>
    </div>
    <svg class="collapse" width="9" height="6" viewBox="0 0 9 6"><path d="M1 5l3.500-3.500L8 5" fill="none" stroke="#666" stroke-width="2"/></svg>
  </div>
  <div class="formula">
    <span class="combo namebox"><select aria-label="Name box"><option>A3</option></select></span>
    <i class="dots"></i>
    <div class="fx">
      <svg width="18" height="16" viewBox="0 0 18 16"><path d="M1 1c6 4 10 8 16 14M16 1C10 4 5 9 1 15" fill="none" stroke="#c4c4c4" stroke-width="2.500"/></svg>
      <svg width="20" height="16" viewBox="0 0 20 16"><path d="M1 9l6 5L19 1" fill="none" stroke="#c4c4c4" stroke-width="3.500"/></svg>
      <span>f<small>x</small></span>
    </div>
    <label class="finput"><input type="text" value="mona" aria-label="Formula"><svg width="11" height="8" viewBox="0 0 11 8"><path d="M0 0h3l2.500 2.500L8 0h3v2L5.500 8 0 2z" fill="#6b6b6b"/></svg></label>
  </div>
  <div class="sheet">
    <div class="cells">
      <table>
        <colgroup><col class="rh"><col class="c"><col class="c"><col class="c"><col class="c"><col class="c"><col class="c"><col class="c"><col class="c"><col class="c"><col class="c"><col class="c"><col class="c"><col></colgroup>
        <thead><tr><th class="corner"></th><th>A</th><th>B</th><th>C</th><th>D</th><th>E</th><th>F</th><th>G</th><th>H</th><th>I</th><th>J</th><th>K</th><th>L</th><th></th></tr></thead>
        <tbody>
          <tr><th>1</th><td>Name</td><td class="spill">P Number</td><td></td><td></td><td></td><td></td><td></td><td></td><td></td><td></td><td></td><td></td><td></td></tr>
          <tr><th>2</th><td>amgd</td><td class="num">124</td><td></td><td></td><td></td><td></td><td></td><td></td><td></td><td></td><td></td><td></td><td></td></tr>
          <tr><th>3</th><td>mona</td><td class="num">125</td><td></td><td></td><td></td><td></td><td></td><td></td><td></td><td></td><td></td><td></td><td></td></tr>
          <tr><th>4</th><td></td><td></td><td></td><td></td><td></td><td></td><td></td><td></td><td></td><td></td><td></td><td></td><td></td></tr>
          <tr><th>5</th><td></td><td></td><td></td><td></td><td></td><td></td><td></td><td></td><td></td><td></td><td></td><td></td><td></td></tr>
          <tr><th>6</th><td></td><td></td><td></td><td></td><td></td><td></td><td></td><td></td><td></td><td></td><td></td><td></td><td></td></tr>
          <tr><th>7</th><td></td><td></td><td></td><td></td><td></td><td></td><td></td><td></td><td></td><td></td><td></td><td></td><td></td></tr>
          <tr><th>8</th><td></td><td></td><td></td><td></td><td></td><td></td><td></td><td></td><td></td><td></td><td></td><td></td><td></td></tr>
          <tr class="cut"><th></th><td></td><td></td><td></td><td></td><td></td><td></td><td></td><td></td><td></td><td></td><td></td><td></td><td></td></tr>
        </tbody>
      </table>
    </div>
    <div class="xl-vscroll"><button aria-label="Scroll up"><i class="tri up"></i></button><i class="thumb"></i><button aria-label="Scroll down"><i class="tri down"></i></button></div>
  </div>
  <div class="sheetbar">
    <i class="tri left pale"></i><i class="tri right pale"></i>
    <button class="sheet-tab">Sheet1</button>
    <button class="add" aria-label="New sheet"><svg width="16" height="16" viewBox="0 0 16 16"><circle cx="8" cy="8" r="7.300" fill="none" stroke="#777"/><path d="M4 8h8M8 4v8" stroke="#666" stroke-width="2"/></svg></button>
    <i class="dots end"></i>
    <div class="xl-hscroll"><button aria-label="Scroll left"><i class="tri left"></i></button><i class="thumb"></i><button aria-label="Scroll right"><i class="tri right"></i></button></div>
  </div>
  <div class="xl-status">
    <span>READY</span>
    <button class="v on" aria-label="Normal"><svg width="13" height="13" viewBox="0 0 13 13"><path d="M.5.5h12v12H.5zM4.500.5v12M8.500.5v12M.5 4.500h12M.5 8.500h12" fill="none" stroke="#e6f3ea"/></svg></button>
    <button class="v" aria-label="Page layout"><svg width="14" height="13" viewBox="0 0 14 13"><path d="M.5.5h13v12H.5zM3.500 2.500h7v8h-7zM5 4.500h4M5 6.500h4M5 8.500h4" fill="none" stroke="#e6f3ea"/></svg></button>
    <button class="v" aria-label="Page break"><svg width="14" height="13" viewBox="0 0 14 13"><path d="M.5.5h13v12H.5z" fill="none" stroke="#e6f3ea"/><path d="M1 1h4v7H1zM6 1h3v7H6z" fill="#e6f3ea"/></svg></button>
    <button class="zoom-b" aria-label="Zoom out"><svg width="8" height="8" viewBox="0 0 8 8"><path d="M1 4.500h6" stroke="#fff" stroke-width="2"/></svg></button>
    <input type="range" aria-label="Zoom" min="0" max="100" value="50">
    <button class="zoom-b" aria-label="Zoom in"><svg width="8" height="8" viewBox="0 0 8 8"><path d="M0 4h8M4 0v8" stroke="#fff" stroke-width="2"/></svg></button>
    <span class="pct">100%</span>
  </div>
</section>
</div>
</main>
</body>
</html>
```
FILE: styles.css
```css
* { box-sizing: border-box; }
body { margin: 0; background: #fff; font-family: "Open Sans", "Noto Sans", sans-serif; font-size: 11px; color: #222; }
button { border: 0; padding: 0; margin: 0; background: none; font: inherit; color: inherit; display: flex; align-items: center; justify-content: center; }
select, input { font: inherit; color: inherit; margin: 0; }
a { color: inherit; text-decoration: none; }
svg { display: block; flex: none; }
.defs { display: none; }
.push { margin-left: auto; }
.m6 { margin-left: 6px; }
.m8 { margin-left: 8px; }
.m10 { margin-left: 10px; }
.m12 { margin-left: 12px; }
.m14 { margin-left: 14px; }
.m18 { margin-left: 18px; }
.caret { flex: none; width: 5px; height: 3px; background: #111; clip-path: polygon(0 0, 100% 0, 50% 100%); }
.caret.grey { background: #666; }
.caret.faint { background: #aaa; }

/* Browser toolbar */
.toolbar { display: flex; align-items: center; height: 35px; padding: 0 7px 3px 14px; border-bottom: 1px solid #dadce0; }
.nav-btn { width: 16px; margin-right: 16px; }
.omnibox { flex: 1; display: flex; align-items: center; height: 28px; margin-left: -2px; padding: 0 10px 0 11px; border-radius: 14px; background: #f1f3f4; }
.url { flex: 1; margin-left: 9px; font-size: 13px; color: #202124; }
.url span { color: #6b6f74; }
.star { margin-left: 16px; }
.puzzle { margin: 0 16px 0 14px; }

/* Web page table, cut off by the right window edge */
.people { width: calc(100% - 9px); margin: 9px 0 0 9px; border-collapse: collapse; table-layout: fixed; font-size: 17px; line-height: 20px; color: #000; }
.col-name { width: 654px; }
.people th, .people td { border: 1px solid #ddd; padding: 9px 8px 8px; text-align: left; }
.people th { padding: 14px 8px 13px; background: #4caf50; color: #fff; font-size: 16px; font-weight: 700; }
.people tr > :last-child { border-right: 0; }
.people tbody tr:first-child { background: #f2f2f2; }

.desktop { display: flex; align-items: flex-start; gap: 39px; padding: 13px 79px 0 108px; }

/* File Explorer */
.explorer { flex: 550 1 0; min-width: 0; background: #fff; border: 1px solid #a0a0a0; box-shadow: 0 2px 12px rgba(0, 0, 0, .3); }
.ex-title { display: flex; align-items: center; height: 30px; padding-left: 10px; }
.ex-title .bar { width: 1px; height: 12px; margin: 0 10px 0 8px; background: #999; }
.ex-title svg + svg { margin-left: 10px; }
.ex-title svg + svg + svg { margin-left: 8px; }
.ex-title svg + .bar + .ex-name { margin-left: -2px; }
.ex-name { margin-right: auto; color: #999; }
.win-btn { width: 46px; height: 30px; }
.ex-tabs { display: flex; align-items: center; height: 24px; border-bottom: 1px solid #dadbdc; padding-right: 4px; }
.ex-tabs button { height: 24px; width: 58px; }
.ex-tabs button.file { width: 56px; background: #0063b1; color: #fff; }
.ex-tabs button.active { background: #f5f6f7; border: 1px solid #dadbdc; border-bottom: 0; }
.ex-tabs button.help { width: 14px; height: 14px; margin-left: 10px; border-radius: 50%; background: #0f6cc9; color: #fff; font-weight: 700; }
.ex-ribbon { display: flex; height: 92px; background: #f5f6f7; border-bottom: 1px solid #dadbdc; line-height: 13px; }
.group { display: flex; flex-direction: column; background: linear-gradient(#e2e3e4, #e2e3e4) right 2px / 1px 86px no-repeat; }
.g-clip { width: 186px; }
.g-org { width: 81px; }
.g-new { width: 83px; }
.g-open { width: 100px; }
.group .body { display: flex; height: 71px; padding-top: 7px; }
.group .label { text-align: center; padding: 4px 3px 0 0; color: #444; }
.big { flex-direction: column; justify-content: flex-start; flex: none; }
.big svg { margin: auto 0; }
.big span { height: 30px; display: block; text-align: center; }
.big .caret { display: block; margin: 4px auto 0; }
.big.dim { color: #777; }
.w66 { width: 66px; padding: 0 1px; }
.w48 { width: 48px; }
.w44 { width: 44px; }
.w42 { width: 42px; }
.w64 { width: 64px; }
.g-clip .big:first-child { margin-left: 6px; }
.stack { display: flex; flex-direction: column; align-items: center; justify-content: space-between; width: 20px; height: 60px; }
.stack.left { align-items: flex-start; width: 28px; }
.stack span { display: flex; align-items: center; gap: 4px; }
.pair { display: flex; flex-direction: column; gap: 13px; padding: 8px 0 0 9px; height: 62px; }
.pair span { display: flex; align-items: center; gap: 3px; height: 16px; }
.pair.line { border-left: 1px solid #dcdddf; margin-left: 6px; padding-left: 7px; }
.pair.tight { padding: 0; gap: 6px; }
.select-btn { flex-direction: column; justify-content: flex-start; width: 42px; height: 87px; margin: 2px; padding-top: 5px; border: 1px solid #c5e0f8; background: #ecf3f8; }
.sel-box { display: flex; align-items: center; justify-content: center; width: 30px; height: 30px; margin-bottom: 5px; padding-bottom: 6px; border: 1px solid #9ccbf3; background: #f5f9fd; }
.select-btn .caret { margin-top: 4px; }
.ex-address { display: flex; align-items: center; height: 34px; padding: 0 12px 0 13px; }
.crumbs { flex: 1; display: flex; align-items: center; height: 22px; margin-left: 6px; padding-left: 4px; border: 1px solid #d9d9d9; color: #111; }
.refresh { width: 18px; height: 20px; margin-left: 3px; border-left: 1px solid #d9d9d9; }
.search { display: flex; align-items: center; width: 190px; height: 22px; margin-left: 12px; padding: 0 8px; border: 1px solid #d9d9d9; }
.search input { flex: 1; min-width: 0; border: 0; padding: 0; outline: 0; background: none; }
.search input::placeholder { color: #6d6d6d; opacity: 1; }
.ex-main { display: flex; height: 193px; }
.side { width: 140px; padding-top: 16px; overflow: hidden; color: #000; }
.side a { display: flex; align-items: center; gap: 5px; height: 24px; padding-left: 32px; }
.side a.top { padding-left: 26px; }
.side .pin { margin-left: auto; margin-right: 4px; }
.vscroll { display: flex; flex-direction: column; align-items: center; width: 16px; padding: 6px 0 5px; background: #f0f0f0; }
.vscroll i { width: 15px; height: 49px; margin: 6px 0 auto; background: #cdcdcd; }
.files { flex: 1; min-width: 0; display: flex; flex-direction: column; margin-left: 2px; border-left: 1px solid #ececec; position: relative; }
.files .sort { position: absolute; left: 138px; top: 0; }
.files table { width: 100%; border-collapse: collapse; table-layout: fixed; }
.files .col-date { width: 117px; }
.files th { height: 26px; padding: 0 0 0 18px; text-align: left; font-weight: 400; color: #44547a; }
.files th + th { padding-left: 6px; border-left: 1px solid #e2e2e2; }
.files td { height: 21px; padding: 0 0 0 18px; white-space: nowrap; color: #000; }
.files td + td { padding-left: 7px; color: #6d6d6d; }
.files tbody::before { content: ""; display: block; height: 6px; }
.files td span { display: flex; align-items: center; gap: 5px; }
.hscroll { display: flex; align-items: center; height: 16px; margin: auto 0 0 1px; padding: 0 5px; background: #f0f0f0; }
.hscroll i { width: 219px; height: 15px; margin: 0 auto 0 6px; background: #cdcdcd; }
.ex-status { display: flex; align-items: center; height: 23px; padding: 0 8px 0 14px; color: #1f3a63; }
.ex-status span { margin-right: auto; }
.view { width: 14px; height: 23px; }
.view.on { width: 22px; margin-right: 4px; border: 1px solid #26a0da; background: #cbe8f6; }

/* Excel */
.excel { position: relative; flex: 834 1 0; min-width: 0; margin-top: 2px; background: #fff; border: 1px solid #7f7f7f; color: #444; }
.art { position: absolute; right: 0; top: 0; }
.xl-title { position: relative; display: flex; height: 28px; }
.quick { display: flex; align-items: center; width: 156px; padding-left: 10px; }
.red { flex: 1; display: flex; align-items: center; justify-content: center; margin-top: -1px; padding-top: 2px; background: #e9100f; border-bottom: 1px solid #b80c0c; color: #fff; font-size: 12px; white-space: pre; }
.controls { display: flex; align-items: center; justify-content: space-between; width: 146px; padding: 0 10px 0 11px; color: #b4b4b4; }
.controls b { font-size: 13px; }
.xl-tabs { position: relative; display: flex; align-items: center; height: 25px; border-bottom: 1px solid #d4d4d4; padding-right: 10px; }
.xl-tabs button { height: 25px; padding: 0 15px; }
.xl-tabs button.file { width: 59px; padding: 0; background: #217346; color: #fff; }
.xl-tabs button.active { width: 62px; margin-left: 4px; padding: 0; border: 1px solid #d4d4d4; border-bottom: 0; background: #fff; color: #217346; }
.avatar { margin-left: 7px; }
.xl-ribbon { position: relative; display: flex; height: 93px; border-bottom: 1px solid #d4d4d4; }
.xg { display: flex; flex-direction: column; flex: none; padding: 3px 4px 0; background: linear-gradient(#e1e1e1, #e1e1e1) right 4px / 1px 84px no-repeat; }
.xbody { display: flex; }
.xr { display: flex; align-items: center; height: 23px; }
.x-clip { width: 86px; }
.x-font { width: 140px; }
.x-align { width: 138px; }
.x-num { width: 87px; }
.x-styles { width: 170px; padding-left: 7px; }
.x-cells { width: 84px; padding-left: 6px; }
.x-edit { width: 77px; }
.xlabel { position: relative; height: 20px; padding-top: 4px; text-align: center; color: #666; }
.xlabel.launch { padding-right: 18px; }
.xlabel svg { position: absolute; right: 0; top: 9px; }
.b { width: 22px; height: 22px; flex: none; font-size: 13px; }
.w28 { width: 28px; }
.b + .caret { margin: 0 5px 0 2px; }
.w28 + .caret { margin-left: 0; }
.b em { font-family: "Liberation Serif", serif; font-weight: 700; font-size: 14px; }
.b u { font-weight: 600; }
.vr { width: 1px; height: 22px; margin: 0 4px; background: #e1e1e1; }
.caret + .vr { margin-left: 3px; }
.font-a { position: relative; font-size: 14px; font-weight: 600; color: #666; }
.font-a.small { font-size: 12px; }
.font-a i { position: absolute; right: 2px; top: 2px; width: 5px; height: 3px; background: #3f79b7; clip-path: polygon(0 100%, 50% 0, 100% 100%); }
.font-a .down { clip-path: polygon(0 0, 100% 0, 50% 100%); }
.fc { width: 16px; height: 16px; margin: 0 4px; line-height: 12px; align-items: flex-start; border-bottom: 4px solid #f00; font-size: 14px; font-weight: 700; color: #666; }
.al-top { align-items: flex-start; padding-top: 2px; }
.al-bot { align-items: flex-end; background: #9fd5b7; }
.combo { position: relative; display: flex; }
.combo::after { content: ""; position: absolute; right: 6px; top: 10px; width: 5px; height: 3px; background: #666; clip-path: polygon(0 0, 100% 0, 50% 100%); }
.combo select { width: 100%; height: 23px; padding: 0 2px; border: 1px solid #ababab; border-radius: 0; background: #fff; appearance: none; color: #222; }
.combo.grow { flex: 1; }
.combo.size { width: 43px; }
.sym .b { font-size: 14px; }
.sym .comma { align-items: flex-start; line-height: 14px; }
.dec { flex-direction: column; align-items: flex-end; padding-right: 4px; font-size: 8px; line-height: 11px; }
.dec span { display: flex; align-items: center; height: 11px; gap: 1px; }
.txt { gap: 4px; white-space: nowrap; }
.paste { flex-direction: column; justify-content: flex-start; width: 42px; padding-top: 3px; line-height: 15px; }
.paste .caret { margin-top: 6px; }
.collapse { margin: auto 10px 5px auto; }
.formula { display: flex; align-items: center; height: 46px; padding: 0 5px; }
.namebox { width: 102px; font-size: 12px; }
.namebox select { height: 26px; padding: 0 6px; border-color: #c6c6c6; color: #444; }
.namebox::after { right: 7px; width: 7px; height: 4px; }
.dots { width: 2px; height: 11px; margin-left: 14px; background: repeating-linear-gradient(#aaa 0 2px, transparent 2px 4px); }
.dots.end { margin-left: auto; }
.fx { display: flex; align-items: center; justify-content: space-between; width: 110px; height: 26px; margin-left: 14px; padding: 0 10px 0 9px; border: 1px solid #c6c6c6; }
.fx span { font: italic 700 21px/22px "Liberation Serif", serif; color: #555; }
.fx small { font-size: 15px; }
.finput { flex: 1; display: flex; align-items: center; height: 26px; margin-left: 3px; padding: 0 2px 0 11px; border: 1px solid #c6c6c6; }
.finput input { flex: 1; min-width: 0; padding: 0; border: 0; outline: 0; font-size: 12px; background: none; }
.sheet { display: flex; }
.cells { flex: 1; min-width: 0; overflow: hidden; border-right: 1px solid #ababab; border-bottom: 1px solid #ababab; }
.cells table { width: 100%; border-spacing: 0; table-layout: fixed; font-family: Lato, "Open Sans", sans-serif; font-size: 14px; line-height: 18px; }
.rh { width: 26px; }
.c { width: 64px; }
.cells th { height: 20px; padding: 0; font-family: "Open Sans", sans-serif; font-size: 12px; font-weight: 400; border-right: 1px solid #d4d4d4; }
.cells thead th { border-bottom: 1px solid #ababab; }
.cells tbody th { border-right: 1px solid #ababab; border-bottom: 1px solid #e6e6e6; }
.cells td { height: 20px; padding: 0 2px; white-space: nowrap; color: #000; border-right: 1px solid #d4d4d4; border-bottom: 1px solid #d4d4d4; }
.cells tr > :last-child { border-right: 0; }
.cells .spill { border-right-color: transparent; overflow: visible; }
.cells .num { text-align: right; font-size: 13px; }
.cells .cut th, .cells .cut td { height: 3px; border-bottom: 0; line-height: 0; }
.cells .corner { background: linear-gradient(135deg, transparent 50%, #dcdcdc 50%) 11px 4px / 11px 11px no-repeat; }
.xl-vscroll { display: flex; flex-direction: column; width: 15px; margin: 2px 3px 0; background: #f1f1f1; }
.xl-vscroll button, .xl-hscroll button { width: 15px; height: 15px; border: 1px solid #b4b4b4; background: #fff; }
.xl-vscroll .thumb { height: 60px; margin-bottom: auto; border: 1px solid #ababab; background: #fff; }
.tri { width: 7px; height: 4px; background: #666; }
.tri.up { clip-path: polygon(0 100%, 50% 0, 100% 100%); }
.tri.down { clip-path: polygon(0 0, 100% 0, 50% 100%); }
.tri.left, .tri.right { width: 4px; height: 7px; }
.tri.left { clip-path: polygon(100% 0, 100% 100%, 0 50%); }
.tri.right { clip-path: polygon(0 0, 100% 50%, 0 100%); }
.tri.pale { background: #c0c0c0; margin-left: 27px; }
.tri.pale + .tri.pale { margin-left: 25px; }
.sheetbar { display: flex; align-items: center; height: 27px; background: #f5f5f5; padding-right: 21px; }
.sheet-tab { width: 65px; height: 25px; margin: -1px 33px 1px 40px; border: solid #ababab; border-width: 0 1px 2px; border-bottom-color: #217346; background: #fff; color: #217346; font-size: 12px; font-weight: 700; }
.xl-hscroll { display: flex; width: 295px; margin-left: 15px; background: #e8e8e8; }
.xl-hscroll .thumb { width: 242px; margin-right: auto; border: 1px solid #ababab; background: #fff; }
.xl-status { display: flex; align-items: center; height: 22px; padding: 0 18px 0 7px; background: #217346; color: #fff; }
.xl-status span:first-child { margin-right: auto; }
.v { width: 38px; height: 22px; }
.v.on { background: #0b6232; }
.zoom-b { width: 16px; height: 22px; }
.xl-status input { appearance: none; width: 100px; height: 11px; background: linear-gradient(#dcebe2, #dcebe2) center / 100% 1px no-repeat; }
.xl-status input::-webkit-slider-thumb { appearance: none; width: 4px; height: 11px; background: #fff; }
.pct { margin-left: 12px; width: 28px; }
```
